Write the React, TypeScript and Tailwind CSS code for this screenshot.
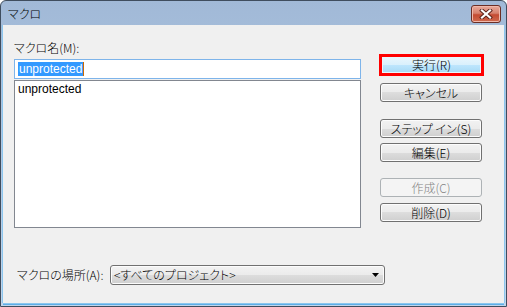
import React from 'react';

const font = "font-['Noto_Sans_CJK_JP',sans-serif] [font-feature-settings:'palt'] font-light";
const latin = "font-['Liberation_Sans',sans-serif] font-normal";

const btnBase =
    'flex items-center justify-center w-[102px] h-[19px] rounded-[3px] border text-[12px] leading-none';
const btnNormal =
    'border-[#707070] text-black bg-[linear-gradient(#f2f2f2_0%,#ebebeb_50%,#dddddd_50%,#cfcfcf_100%)] shadow-[inset_0_0_0_1px_#fcfcfc]';
const btnDisabled = 'border-[#adb2b5] text-[#838383] bg-[#f4f4f4]';

const DialogButton: React.FC<{ label: string; disabled?: boolean; className?: string }> = ({
    label,
    disabled,
    className,
}) => (
    <div className={`${btnBase} ${disabled ? btnDisabled : btnNormal} ${className ?? ''}`}>{label}</div>
);

const App: React.FC = () => {
    return (
        <div className={`w-[507px] h-[307px] ${font} text-[12px] text-black`}>
            <div className="w-full h-full flex flex-col rounded-t-[6px] border border-[#3f4d5e] bg-[linear-gradient(#a1b9d7,#c0d5ec)]">
                {/* title bar */}
                <div className="h-[24px] flex items-center pl-[7px] pr-[5px] shrink-0">
                    <span className="text-[12px] leading-none mt-[1px]">マクロ</span>
                    <div className="ml-auto w-[30px] h-[18px] mt-[2px] rounded-[3px] border border-[#6b2e25] bg-[linear-gradient(#e9a99b_0%,#d7816d_45%,#c44a31_55%,#cf6a4f_100%)] shadow-[inset_0_0_0_1px_#f0b8aa] flex items-center justify-center">
                        <svg width="14" height="10" viewBox="0 0 14 10">
                            <path d="M3 1.5 L11 8.5 M11 1.5 L3 8.5" stroke="#5a2118" strokeWidth="4" strokeLinecap="square" />
                            <path d="M3 1.5 L11 8.5 M11 1.5 L3 8.5" stroke="#ffffff" strokeWidth="2.2" strokeLinecap="square" />
                        </svg>
                    </div>
                </div>

                {/* client area */}
                <div className="flex-1 mx-[2px] mb-[3px] bg-[#f0f0f0] shadow-[0_1px_0_0_#8cc6ee,0_2px_0_0_#5eaee6,1px_0_0_0_#8cc6ee,-1px_0_0_0_#8cc6ee] flex flex-col">
                    <div className="flex">
                        {/* left column */}
                        <div className="ml-[11px] w-[347px] flex flex-col">
                            <div className="mt-[16px] h-[14px] leading-[14px]">マクロ名(M):</div>
                            <div className="mt-[4px] h-[20px] border border-[#7eb4ea] bg-white flex items-center pl-[3px]">
                                <span className={`${latin} bg-[#3399ff] text-white leading-[14px] px-[1px]`}>unprotected</span>
                                <span className="w-[1px] h-[14px] bg-[#cc6a00]" />
                            </div>
                            <div className="mt-[1px] h-[148px] border border-[#828790] bg-white pl-[3px] pt-[1px]">
                                <div className={`${latin} leading-[14px]`}>unprotected</div>
                            </div>
                        </div>

                        {/* right column */}
                        <div className="ml-[19px] flex flex-col">
                            <div className="mt-[29px] -ml-[1px] w-[105px] h-[22px] border-[3px] border-[#ff0000] flex">
                                <div className="flex-1 flex items-center justify-center text-[12px] leading-none bg-[linear-gradient(#eaf6fd_0%,#d9f0fc_50%,#bee6fd_50%,#a7d9f5_100%)] shadow-[inset_0_0_0_1px_#e8f6fd]">
                                    実行(R)
                                </div>
                            </div>
                            <DialogButton label="キャンセル" className="mt-[7px]" />
                            <DialogButton label="ステップ イン(S)" className="mt-[17px]" />
                            <DialogButton label="編集(E)" className="mt-[5px]" />
                            <DialogButton label="作成(C)" disabled className="mt-[16px]" />
                            <DialogButton label="削除(D)" className="mt-[6px]" />
                        </div>
                    </div>

                    {/* bottom row */}
                    <div className="mt-[37px] flex items-center">
                        <span className="ml-[14px] w-[93px] leading-[14px]">マクロの場所(A):</span>
                        <div className="w-[275px] h-[20px] rounded-[3px] border border-[#707070] bg-[linear-gradient(#f2f2f2_0%,#ebebeb_50%,#dddddd_50%,#cfcfcf_100%)] shadow-[inset_0_0_0_1px_#fcfcfc] flex items-center pl-[3px] pr-[5px]">
                            <span className="leading-[14px]">&lt;すべてのプロジェクト&gt;</span>
                            <svg className="ml-auto" width="7" height="4" viewBox="0 0 7 4">
                                <path d="M0 0 H7 L3.5 4 Z" fill="#000" />
                            </svg>
                        </div>
                    </div>
                </div>
            </div>
        </div>
    );
};

export default App;
